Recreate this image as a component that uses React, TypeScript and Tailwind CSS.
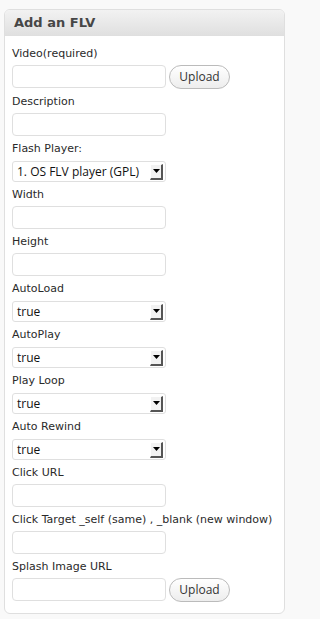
import React from "react";

const labelFont = { fontFamily: '"DejaVu Sans", "Open Sans", sans-serif' };
const ctrlFont = { fontFamily: '"Open Sans", "DejaVu Sans", sans-serif' };

function Label({ children }: { children: React.ReactNode }) {
  return (
    <div className="pb-[4px] pt-[6px]">
      <div className="h-[14px] whitespace-nowrap text-[11px] leading-[14px] text-[#2a2a2a]" style={labelFont}>
        {children}
      </div>
    </div>
  );
}

function TextInput() {
  return (
    <div className="h-[23px] w-[154px] rounded-[4px] border border-[#dfdfdf] bg-white" />
  );
}

function UploadButton() {
  return (
    <div
      className="ml-[3px] flex h-[24px] w-[61px] items-center justify-center rounded-full border border-[#bbbbbb] bg-gradient-to-b from-white to-[#ededed] text-[12px] text-[#333]"
      style={ctrlFont}
    >
      Upload
    </div>
  );
}

function Select({ value }: { value: string }) {
  return (
    <div className="pt-[1px]">
      <div className="flex h-[21px] w-[154px] items-center rounded-[3px] border border-[#dfdfdf] bg-white pl-[4px] pr-[2px]">
        <span className="flex-1 text-[12px] leading-none text-[#111]" style={ctrlFont}>
          {value}
        </span>
        <div className="flex h-[16px] w-[13px] items-center justify-center border-b-2 border-l border-r-2 border-t border-b-[#555] border-l-white border-r-[#555] border-t-white bg-[#f2f2f2]">
          <svg width="7" height="4" viewBox="0 0 7 4">
            <polygon points="0,0 7,0 3.5,4" fill="#000" />
          </svg>
        </div>
      </div>
    </div>
  );
}

export default function App() {
  return (
    <div className="min-h-[619px] w-full min-w-[292px] bg-[#f9f9f9] pl-[4px] pt-[9px]">
      <div className="w-[281px] overflow-hidden rounded-[6px] border border-[#dfdfdf] bg-white">
        <div
          className="flex h-[26px] items-center border-b border-[#dfdfdf] bg-gradient-to-b from-[#f2f2f2] to-[#e0e0e0] pl-[9px] text-[13px] font-bold text-[#464646]"
          style={labelFont}
        >
          Add an FLV
        </div>
        <div className="px-[7px] pb-[11px] pt-[5px]">
          <Label>Video(required)</Label>
          <div className="flex items-start">
            <TextInput />
            <UploadButton />
          </div>
          <Label>Description</Label>
          <TextInput />
          <Label>Flash Player:</Label>
          <Select value="1. OS FLV player (GPL)" />
          <Label>Width</Label>
          <TextInput />
          <Label>Height</Label>
          <TextInput />
          <Label>AutoLoad</Label>
          <Select value="true" />
          <Label>AutoPlay</Label>
          <Select value="true" />
          <Label>Play Loop</Label>
          <Select value="true" />
          <Label>Auto Rewind</Label>
          <Select value="true" />
          <Label>Click URL</Label>
          <TextInput />
          <Label>Click Target _self (same) , _blank (new window)</Label>
          <TextInput />
          <Label>Splash Image URL</Label>
          <div className="flex items-start">
            <TextInput />
            <UploadButton />
          </div>
        </div>
      </div>
    </div>
  );
}
